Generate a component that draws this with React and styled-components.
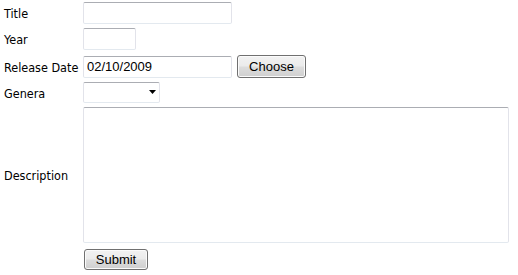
import React from "react";
import styled, { createGlobalStyle } from "styled-components";

const Global = createGlobalStyle`
  html, body { margin: 0; padding: 0; background: #fff; }
  body { font-family: "DejaVu Sans", sans-serif; }
`;

const Form = styled.form`
  display: flex;
  flex-direction: column;
  padding: 2px 0 0 4px;
`;

const Row = styled.div`
  display: flex;
  align-items: center;
  margin-top: ${(p) => p.$gap || 0}px;
  height: ${(p) => p.$h}px;
`;

const Label = styled.label`
  width: 79px;
  flex: none;
  font-family: "DejaVu Sans", sans-serif;
  font-stretch: condensed;
  font-size: 12.5px;
  color: #000;
  white-space: nowrap;
  padding-top: 1px;
`;

const Controls = styled.div`
  display: flex;
  align-items: center;
  gap: 5px;
  margin-left: ${(p) => p.$offset || 0}px;
`;

const TextBox = styled.input`
  box-sizing: border-box;
  width: ${(p) => p.$w}px;
  height: 22px;
  margin: 0;
  padding: 0 3px;
  border: 1px solid #e2e3ea;
  border-top-color: #abadb3;
  border-bottom-color: #e3e9ef;
  border-radius: 2px;
  font-family: "Liberation Sans", Arial, sans-serif;
  font-size: 13px;
  color: #000;
  background: #fff;
  outline: none;
`;

const Button = styled.button`
  box-sizing: border-box;
  width: ${(p) => p.$w}px;
  height: ${(p) => p.$h}px;
  margin: 0;
  padding: 0;
  border: 1px solid #707070;
  border-radius: 3px;
  background: linear-gradient(#f2f2f2 0%, #ebebeb 48%, #dddddd 52%, #cfcfcf 100%);
  box-shadow: inset 0 0 0 1px #fbfbfb;
  font-family: "Liberation Sans", Arial, sans-serif;
  font-size: 13px;
  color: #000;
`;

const SelectWrap = styled.div`
  position: relative;
  width: 77px;
  height: 21px;
`;

const Select = styled.select`
  box-sizing: border-box;
  appearance: none;
  width: 100%;
  height: 100%;
  margin: 0;
  border: 1px solid #e2e3ea;
  border-top-color: #abadb3;
  border-bottom-color: #e3e9ef;
  border-radius: 2px;
  background: #fff;
  font-family: "Liberation Sans", Arial, sans-serif;
  font-size: 13px;
  outline: none;
`;

const Arrow = styled.svg`
  position: absolute;
  right: 3px;
  top: 8px;
  pointer-events: none;
`;

const TextArea = styled.textarea`
  box-sizing: border-box;
  width: 426px;
  height: 136px;
  margin: 0;
  padding: 2px;
  border: 1px solid #e2e3ea;
  border-top-color: #abadb3;
  border-bottom-color: #e3e9ef;
  border-radius: 2px;
  resize: none;
  outline: none;
  font-family: "Liberation Sans", Arial, sans-serif;
  font-size: 13px;
`;

export default function App() {
  return (
    <>
      <Global />
      <Form onSubmit={(e) => e.preventDefault()}>
        <Row $h={22}>
          <Label>Title</Label>
          <Controls>
            <TextBox $w={149} />
          </Controls>
        </Row>
        <Row $h={22} $gap={4}>
          <Label>Year</Label>
          <Controls>
            <TextBox $w={53} />
          </Controls>
        </Row>
        <Row $h={23} $gap={5}>
          <Label>Release Date</Label>
          <Controls>
            <TextBox $w={149} defaultValue="02/10/2009" />
            <Button type="button" $w={69} $h={23}>Choose</Button>
          </Controls>
        </Row>
        <Row $h={21} $gap={4}>
          <Label>Genera</Label>
          <Controls>
            <SelectWrap>
              <Select defaultValue="">
                <option value=""></option>
              </Select>
              <Arrow width="8" height="5" viewBox="0 0 8 5">
                <path d="M0 0 H7 L3.5 4 Z" fill="#000" />
              </Arrow>
            </SelectWrap>
          </Controls>
        </Row>
        <Row $h={136} $gap={4}>
          <Label>Description</Label>
          <Controls>
            <TextArea />
          </Controls>
        </Row>
        <Row $h={21} $gap={6}>
          <Label />
          <Controls $offset={1}>
            <Button type="submit" $w={64} $h={21}>Submit</Button>
          </Controls>
        </Row>
      </Form>
    </>
  );
}
